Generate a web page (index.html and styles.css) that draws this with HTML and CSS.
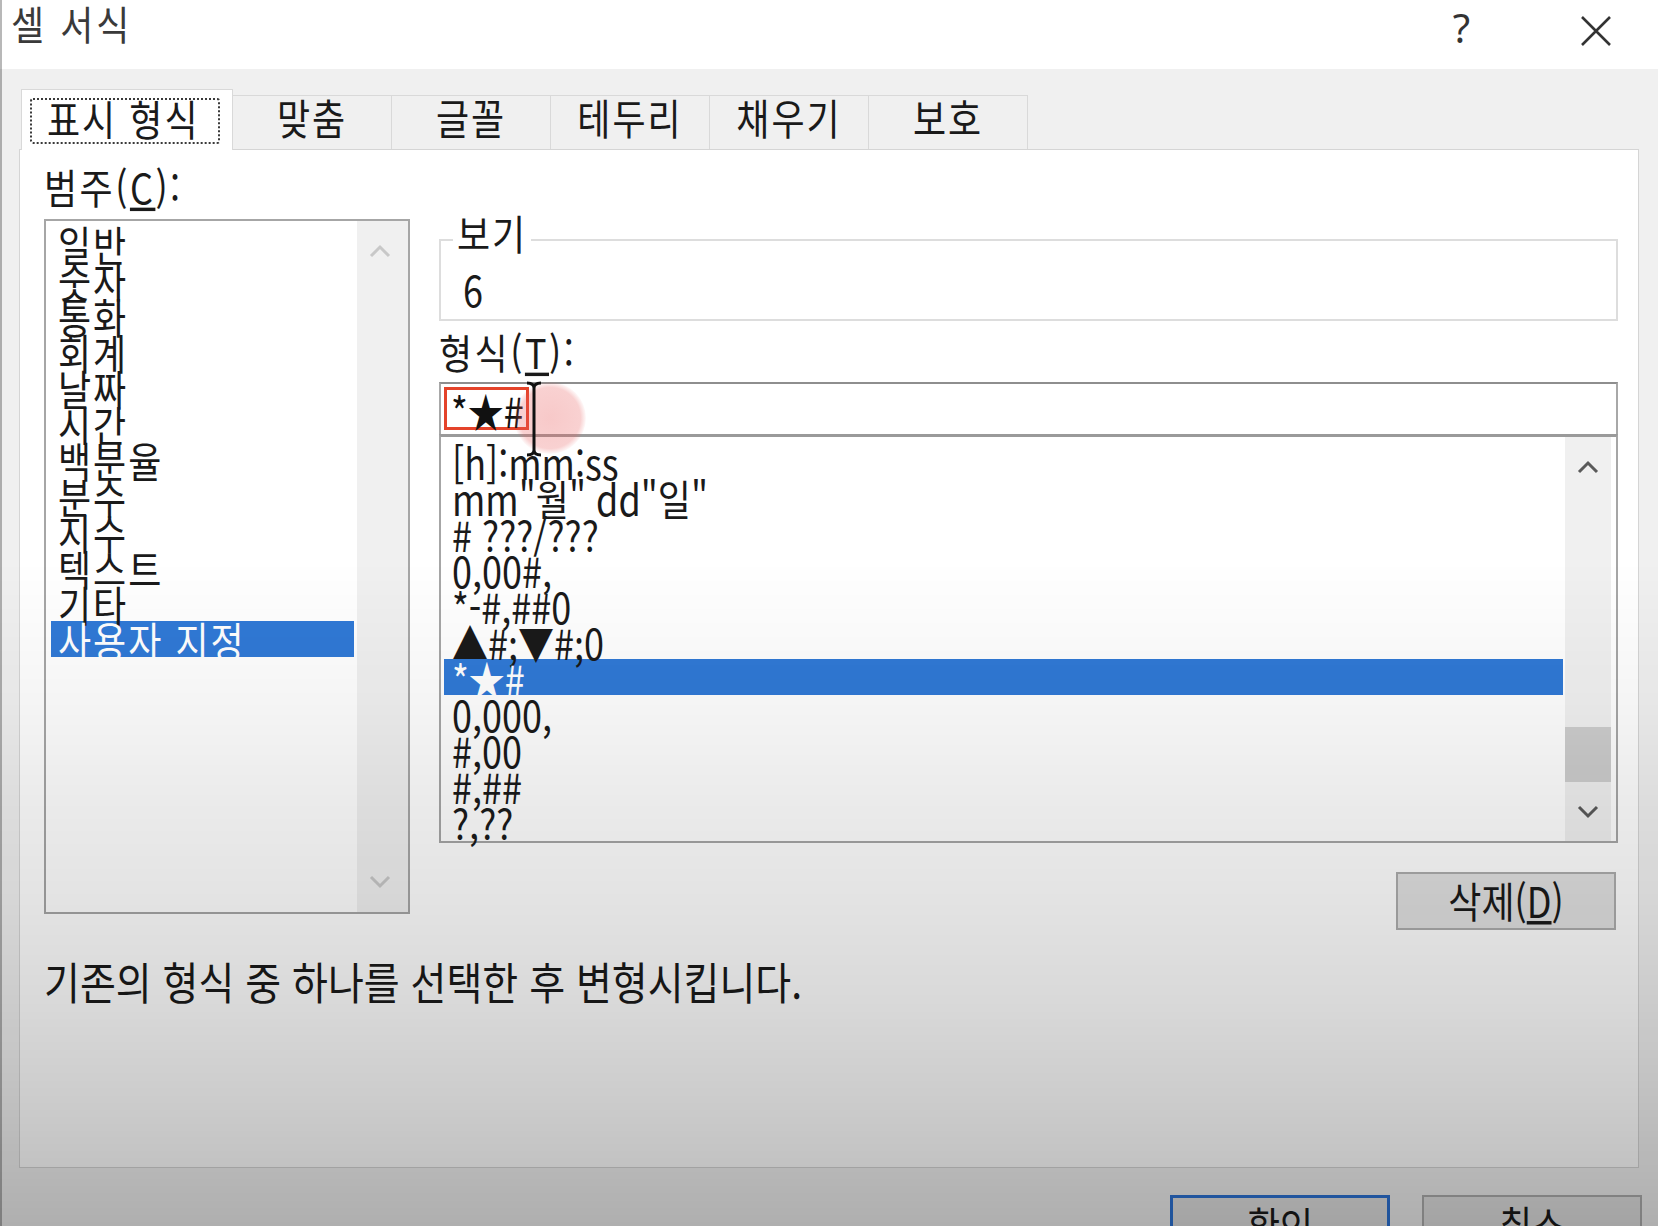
FILE: index.html
```html
<!DOCTYPE html>
<html lang="ko">
<head>
<meta charset="utf-8">
<title>셀 서식</title>
<link rel="stylesheet" href="styles.css">
</head>
<body>
<div class="dialog">
  <header class="titlebar">
    <h1 class="title">셀 서식</h1>
    <div class="title-buttons">
      <span class="help">?</span>
      <svg class="close" width="32" height="32" viewBox="0 0 32 32"><path d="M2 2 L30 30 M30 2 L2 30"/></svg>
    </div>
  </header>

  <main class="body">
    <nav class="tabs">
      <div class="tab active"><span class="focus"><span class="t">표시 형식</span></span></div>
      <div class="tab"><span class="t">맞춤</span></div>
      <div class="tab"><span class="t">글꼴</span></div>
      <div class="tab"><span class="t">테두리</span></div>
      <div class="tab"><span class="t">채우기</span></div>
      <div class="tab"><span class="t">보호</span></div>
    </nav>

    <section class="panel">
      <div class="columns">
        <div class="left">
          <div class="label cat-label">범주(<u>C</u>):</div>
          <div class="listbox cat">
            <ul class="items">
              <li><span class="t">일반</span></li>
              <li><span class="t">숫자</span></li>
              <li><span class="t">통화</span></li>
              <li><span class="t">회계</span></li>
              <li><span class="t">날짜</span></li>
              <li><span class="t">시간</span></li>
              <li><span class="t">백분율</span></li>
              <li><span class="t">분수</span></li>
              <li><span class="t">지수</span></li>
              <li><span class="t">텍스트</span></li>
              <li><span class="t">기타</span></li>
              <li class="sel"><span class="t">사용자 지정</span></li>
            </ul>
            <div class="scrollbar disabled">
              <span class="arrow"><svg width="22" height="14" viewBox="0 0 22 14"><polyline points="2,12 11,3 20,12"/></svg></span>
              <span class="track"></span>
              <span class="arrow"><svg width="22" height="14" viewBox="0 0 22 14"><polyline points="2,2 11,11 20,2"/></svg></span>
            </div>
          </div>
        </div>

        <div class="right">
          <div class="group">
            <span class="legend">보기</span>
            <div class="sample">6</div>
          </div>
          <div class="label fmt-label">형식(<u>T</u>):</div>
          <div class="input">
            <span class="mark"><span class="t">*★#</span></span>
          </div>
          <div class="listbox fmt">
            <ul class="items">
              <li><span class="t">[h]:mm:ss</span></li>
              <li><span class="t">mm"월" dd"일"</span></li>
              <li><span class="t"># ???/???</span></li>
              <li><span class="t">0,00#,</span></li>
              <li><span class="t">*-#,##0</span></li>
              <li><span class="t">▲#;▼#;0</span></li>
              <li class="sel"><span class="t">*★#</span></li>
              <li><span class="t">0,000,</span></li>
              <li><span class="t">#,00</span></li>
              <li><span class="t">#,##</span></li>
              <li><span class="t">?,??</span></li>
            </ul>
            <div class="scrollbar">
              <span class="arrow"><svg width="22" height="14" viewBox="0 0 22 14"><polyline points="2,12 11,3 20,12"/></svg></span>
              <span class="track"><span class="thumb"></span></span>
              <span class="arrow down"><svg width="22" height="14" viewBox="0 0 22 14"><polyline points="2,2 11,11 20,2"/></svg></span>
            </div>
          </div>
          <div class="btn-row">
            <button class="btn del"><span class="t">삭제(<u>D</u>)</span></button>
          </div>
        </div>
      </div>
      <p class="desc">기존의 형식 중 하나를 선택한 후 변형시킵니다.</p>
    </section>

    <footer class="footer">
      <button class="btn foot ok"><span class="t">확인</span></button>
      <button class="btn foot"><span class="t">취소</span></button>
    </footer>
  </main>

  <div class="cursor-glow"></div>
  <svg class="ibeam" width="18" height="76" viewBox="0 0 18 76"><path d="M2 2 Q9 2 9 7 Q9 2 16 2 M9 7 V69 M2 74 Q9 74 9 69 Q9 74 16 74"/></svg>
  <div class="shade"></div>
</div>
</body>
</html>
```

FILE: styles.css
```css
* { box-sizing: border-box; }

html, body {
  margin: 0;
  padding: 0;
}

body {
  width: 1658px;
  height: 1226px;
  overflow: hidden;
  background: #f0f0f0;
  font-family: "Noto Sans CJK KR", "Noto Sans", sans-serif;
  font-size: 36px;
  line-height: 36px;
  color: #1a1a1a;
}

.dialog {
  position: relative;
  width: 1658px;
  height: 1226px;
}

/* vertically stretched text, as in the captured dialog */
.t {
  display: inline-block;
  transform: scaleY(1.16);
}

/* ---------- title bar ---------- */
.titlebar {
  height: 69px;
  background: #ffffff;
  display: flex;
  justify-content: space-between;
  align-items: flex-start;
  padding: 4px 0 0 11px;
}

.title {
  margin: 0;
  font-size: 36px;
  font-weight: 400;
  line-height: 36px;
  letter-spacing: 3px;
  color: #3a3a3a;
  transform: scaleY(1.12);
}

.title-buttons {
  display: flex;
  align-items: flex-start;
  gap: 110px;
  padding-right: 46px;
}

.help {
  font-family: "Noto Sans", sans-serif;
  font-size: 40px;
  line-height: 40px;
  margin-top: 4px;
  color: #333;
}

.close {
  margin-top: 11px;
  fill: none;
  stroke: #333;
  stroke-width: 2.6;
}

/* ---------- body ---------- */
.body {
  padding: 20px 19px 0 19px;
}

.tabs {
  display: flex;
  align-items: flex-end;
  height: 60px;
  padding-left: 2px;
}

.tab {
  width: 160px;
  height: 54px;
  margin-left: -1px;
  border: 1px solid #d9d9d9;
  border-bottom: none;
  background: #f0f0f0;
  text-align: center;
  padding-top: 2px;
  letter-spacing: 2px;
  color: #1a1a1a;
}

.tab.active {
  width: 212px;
  height: 61px;
  margin-left: 0;
  margin-bottom: -1px;
  position: relative;
  z-index: 1;
  background: #ffffff;
  text-align: left;
  padding: 8px 0 0 8px;
}

.focus {
  display: inline-block;
  width: 190px;
  height: 46px;
  border: 2px dotted #3a3a3a;
  border-radius: 3px;
  padding-left: 15px;
  line-height: 34px;
}

.panel {
  height: 1019px;
  background: #ffffff;
  border: 1px solid #d5d5d5;
  padding: 0 20px 0 24px;
}

.columns {
  display: grid;
  grid-template-columns: 366px 1fr;
  column-gap: 29px;
  align-items: start;
}

.label {
  height: 36px;
  white-space: nowrap;
  letter-spacing: 2.5px;
  transform: scaleY(1.14);
}

.label u {
  text-underline-offset: 3px;
}

.cat-label {
  margin-top: 18px;
}

/* ---------- list boxes ---------- */
.listbox {
  display: flex;
  background: #ffffff;
  border: 2px solid #a6a6a6;
}

.listbox.cat {
  margin-top: 15px;
  height: 695px;
}

.items {
  flex: 1;
  list-style: none;
  margin: 0;
  min-width: 0;
}

.cat .items {
  padding: 4px 3px 0 5px;
}

.items li {
  height: 36px;
  line-height: 36px;
  white-space: nowrap;
  color: #1a1a1a;
}

.cat .items li {
  padding-left: 7px;
  letter-spacing: 2px;
}

.items li.sel {
  background: #3079d6;
  color: #ffffff;
}

.scrollbar {
  display: flex;
  flex-direction: column;
  background: #f0f0f0;
}

.cat .scrollbar {
  width: 51px;
}

.arrow {
  height: 60px;
  display: flex;
  align-items: center;
  justify-content: center;
}

.arrow svg {
  fill: none;
  stroke: #5a5a5a;
  stroke-width: 3;
}

.disabled .arrow {
  padding-right: 6px;
}

.disabled .arrow svg {
  stroke: #c8c8c8;
}

.track {
  flex: 1;
  display: flex;
  flex-direction: column;
  justify-content: flex-end;
}

.thumb {
  height: 55px;
  background: #cdcdcd;
}

/* ---------- right column ---------- */
.group {
  position: relative;
  margin-top: 89px;
  height: 82px;
  border: 2px solid #dddddd;
  padding: 29px 0 0 22px;
}

.legend {
  position: absolute;
  top: -27px;
  left: 12px;
  padding: 0 4px;
  letter-spacing: 2px;
  background: #ffffff;
  transform: scaleY(1.14);
}

.sample {
  height: 36px;
  transform: scaleY(1.18);
}

.fmt-label {
  margin-top: 12px;
}

.input {
  margin-top: 13px;
  height: 52px;
  background: #ffffff;
  border: 2px solid #a8a8a8;
  border-top-color: #8e8e8e;
  border-bottom: none;
  padding: 3px 0 0 3px;
}

.mark {
  display: inline-block;
  width: 85px;
  height: 43px;
  border: 3px solid #e4432a;
  padding: 1px 0 0 4px;
  line-height: 36px;
  white-space: nowrap;
  color: #111;
}

.listbox.fmt {
  height: 409px;
  border-top-width: 3px;
  border-top-color: #9a9a9a;
}

.fmt .items {
  padding: 6px 2px 0 3px;
}

.fmt .items li {
  padding-left: 8px;
}

.fmt .scrollbar {
  width: 46px;
  margin-right: 5px;
}

.fmt .arrow.down {
  height: 59px;
}

.btn-row {
  display: flex;
  justify-content: flex-end;
  margin-top: 29px;
  padding-right: 2px;
}

.btn {
  font-family: "Noto Sans CJK KR", "Noto Sans", sans-serif;
  font-size: 36px;
  line-height: 36px;
  color: #1a1a1a;
  background: #e1e1e1;
  border: 2px solid #adadad;
  padding: 0 0 4px 0;
  margin: 0;
}

.btn u {
  text-underline-offset: 3px;
}

.del {
  width: 220px;
  height: 58px;
}

.desc {
  margin: 31px 0 0 0;
  font-size: 39px;
  line-height: 40px;
  white-space: nowrap;
  color: #1a1a1a;
  transform: scaleY(1.14);
  transform-origin: 0 50%;
}

/* ---------- footer ---------- */
.footer {
  display: flex;
  justify-content: flex-end;
  gap: 32px;
  margin-top: 27px;
  margin-right: -3px;
}

.foot {
  width: 220px;
  height: 60px;
  padding-top: 8px;
  display: flex;
  justify-content: center;
  align-items: flex-start;
}

.ok {
  border: 3px solid #2c72d4;
}

/* ---------- overlays ---------- */
.cursor-glow {
  position: absolute;
  left: 514px;
  top: 382px;
  width: 72px;
  height: 72px;
  border-radius: 50%;
  background: radial-gradient(circle, rgba(232, 90, 90, 0.33) 0, rgba(232, 90, 90, 0.28) 60%, rgba(232, 90, 90, 0) 72%);
  pointer-events: none;
}

.ibeam {
  position: absolute;
  left: 525px;
  top: 381px;
  fill: none;
  stroke: #111;
  stroke-width: 3;
  pointer-events: none;
}

.shade {
  position: absolute;
  inset: 0;
  pointer-events: none;
  border-left: 2px solid rgba(0, 0, 0, 0.28);
  background: linear-gradient(to bottom,
    rgba(0, 0, 0, 0) 0px,
    rgba(0, 0, 0, 0) 560px,
    rgba(0, 0, 0, 0.04) 700px,
    rgba(0, 0, 0, 0.08) 800px,
    rgba(0, 0, 0, 0.11) 900px,
    rgba(0, 0, 0, 0.15) 1000px,
    rgba(0, 0, 0, 0.2) 1100px,
    rgba(0, 0, 0, 0.24) 1168px,
    rgba(0, 0, 0, 0.27) 1226px);
}
```
